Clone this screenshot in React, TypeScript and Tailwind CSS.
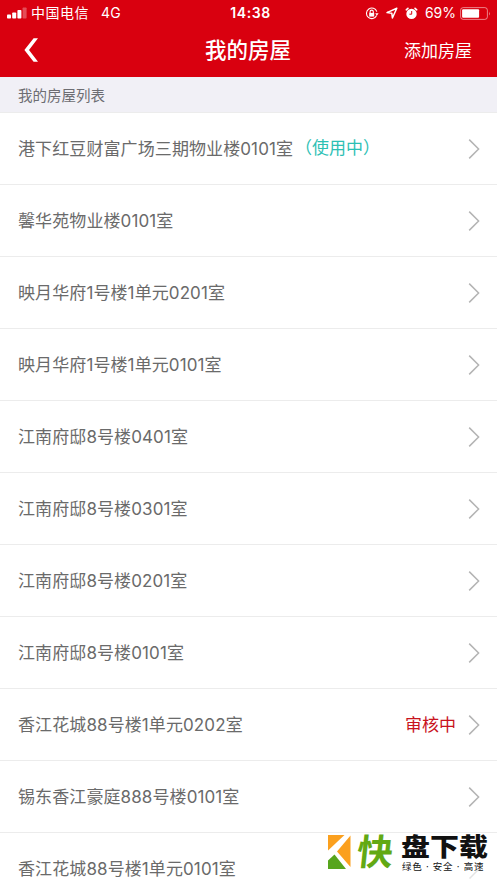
type House = {
  name: string;
  inUse?: boolean;
  reviewing?: boolean;
};

const houses: House[] = [
  { name: '港下红豆财富广场三期物业楼0101室', inUse: true },
  { name: '馨华苑物业楼0101室' },
  { name: '映月华府1号楼1单元0201室' },
  { name: '映月华府1号楼1单元0101室' },
  { name: '江南府邸8号楼0401室' },
  { name: '江南府邸8号楼0301室' },
  { name: '江南府邸8号楼0201室' },
  { name: '江南府邸8号楼0101室' },
  { name: '香江花城88号楼1单元0202室', reviewing: true },
  { name: '锡东香江豪庭888号楼0101室' },
  { name: '香江花城88号楼1单元0101室' },
];

function Chevron() {
  return (
    <svg className="h-5 w-3 shrink-0" viewBox="0 0 12 20" fill="none" stroke="#b4b4b4" strokeWidth="1.5">
      <path d="M1.2 0.6 L10.6 10 L1.2 19.4" />
    </svg>
  );
}

function StatusBar() {
  return (
    <div className="grid h-6 grid-cols-[1fr_auto_1fr] items-center pl-[7px] pr-[6px] pt-px text-[14px] leading-6">
      <div className="flex items-center">
        <svg className="h-3 w-5" viewBox="0 0 20 12" fill="#fff">
          <rect x="0" y="7.5" width="4" height="4" rx="0.8" />
          <rect x="5.2" y="5.5" width="4" height="6" rx="0.8" />
          <rect x="10.4" y="3" width="4" height="8.5" rx="0.8" />
          <rect x="15.6" y="0.5" width="4" height="11" rx="0.8" opacity="0.3" />
        </svg>
        <span className="ml-1 tracking-[0.5px]">中国电信</span>
        <span className="ml-3 tracking-[0.2px]">4G</span>
      </div>
      <span className="pl-[3px] text-[14px] font-semibold tracking-[0.6px]">14:38</span>
      <div className="flex items-center justify-end">
        <svg className="h-[13px] w-[14px]" viewBox="0 0 14 13" fill="none" stroke="#fff" strokeWidth="1.1">
          <path d="M11.6 8.6 A5.3 5.3 0 1 1 11.8 4.6" />
          <path d="M10.2 6.3 H13.6 L11.9 8.8 Z" fill="#fff" stroke="none" />
          <rect x="4.2" y="5.9" width="5" height="3.7" fill="#fff" stroke="none" />
          <path d="M5.1 6 V4.7 A1.6 1.6 0 0 1 8.3 4.7 V6" />
        </svg>
        <svg className="ml-[7px] h-3 w-3" viewBox="0 0 12 12" fill="none" stroke="#fff" strokeWidth="1.5" strokeLinejoin="round">
          <path d="M10.8 1.2 L1 5.6 L5.8 6.2 L6.4 11 Z" />
        </svg>
        <svg className="ml-[7px] h-[13px] w-[13px]" viewBox="0 0 13 13">
          <circle cx="6.5" cy="6.9" r="5.2" fill="#fff" />
          <path d="M0.9 3.4 A7 7 0 0 1 3.5 1 M12.1 3.4 A7 7 0 0 0 9.5 1" stroke="#fff" strokeWidth="1.6" fill="none" />
          <path d="M6.7 4 V7.2 H4.4" stroke="#d9000f" strokeWidth="1" fill="none" />
        </svg>
        <span className="ml-[7px] text-[14px]">69%</span>
        <svg className="ml-1 h-[13px] w-[31px]" viewBox="0 0 31 13" fill="none">
          <rect x="0.6" y="0.6" width="26.8" height="11.8" rx="2.6" stroke="#fff" strokeOpacity="0.5" />
          <rect x="2.1" y="2.2" width="17" height="8.6" rx="1" fill="#fff" />
          <path d="M29 4.5 Q30.6 6.5 29 8.5 Z" fill="#fff" fillOpacity="0.5" />
        </svg>
      </div>
    </div>
  );
}

function NavBar() {
  return (
    <div className="grid h-[53px] grid-cols-[1fr_auto_1fr] items-center pl-6 pr-[25px]">
      <svg className="mb-0.5 h-6 w-[15px]" viewBox="0 0 15 24" fill="#fff">
        <path d="M9.6 0.2 H14 L5 12 L14 23.8 H9.6 L0.4 12 Z" />
      </svg>
      <h1 className="text-[21.5px] font-medium leading-[51px]">我的房屋</h1>
      <button className="justify-self-end text-[17px] leading-[52px]">添加房屋</button>
    </div>
  );
}

function HouseRow({ house }: { house: House }) {
  return (
    <li className="flex h-[72px] shrink-0 items-center border-b border-[#ececec] pl-[18px] pr-[17px] text-[17px] text-[#6a6a6a]">
      <span className="pt-0.5 tracking-[0.1px]">{house.name}</span>
      {house.inUse && <span className="ml-[2px] text-[#2cc0b4]">（使用中）</span>}
      {house.reviewing && <span className="ml-auto mr-3 pt-0.5 text-[#c8141e]">审核中</span>}
      <span className={house.reviewing ? '' : 'ml-auto'}>
        <Chevron />
      </span>
    </li>
  );
}

// Download-site badge that sits over the last row
function Watermark() {
  return (
    <div className="absolute bottom-0 right-0 flex h-[50px] w-[171px] items-start bg-white pl-0.5 pt-0.5">
      <svg className="h-[34px] w-[23px] shrink-0" viewBox="0 0 23 34">
        <path d="M0 0 H16.5 L0 15.5 Z" fill="#fba01e" />
        <path d="M22.5 0.5 V32 L9 16.5 Z" fill="#fba01e" />
        <path d="M0 25.5 L6.5 19.5 L18 34 H0 Z" fill="#57a51d" />
      </svg>
      <span className="ml-[6px] w-[37px] -skew-x-6 text-[36px] font-bold leading-[34px] text-[#62a914]">快</span>
      <div className="ml-[7px] flex h-[38px] flex-col justify-between whitespace-nowrap text-[#111]">
        <span className="h-6 origin-top scale-y-[0.86] text-[29px] font-black leading-[27px]">盘下载</span>
        <span className="h-3 pl-px text-[9.5px] leading-[12px] tracking-[0.75px]">绿色 · 安全 · 高速</span>
      </div>
      <svg className="absolute bottom-1 right-[18px] h-2.5 w-2.5" viewBox="0 0 10 10" stroke="#e3e3e3" strokeWidth="1.5">
        <path d="M0.5 9.5 L9.5 0.5" />
      </svg>
    </div>
  );
}

export default function App() {
  return (
    <div className="relative flex h-[883px] w-[497px] flex-col overflow-hidden bg-white font-[Inter,'Noto_Sans_CJK_SC',sans-serif]">
      <header className="h-[77px] shrink-0 bg-[#d9000f] text-white">
        <StatusBar />
        <NavBar />
      </header>
      <div className="h-9 shrink-0 border-b border-[#ececec] bg-[#f1f0f6] pl-[18px] pt-px text-[14.5px] leading-9 text-[#6d6d72]">
        我的房屋列表
      </div>
      <ul className="flex flex-col">
        {houses.map((house) => (
          <HouseRow key={house.name} house={house} />
        ))}
      </ul>
      <Watermark />
    </div>
  );
}
